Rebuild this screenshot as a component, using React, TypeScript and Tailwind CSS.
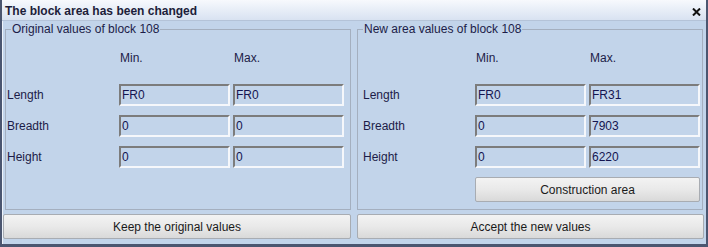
import React from 'react';

const font = { fontFamily: '"Liberation Sans", Arial, sans-serif' };

type Row = { label: string; min: string; max: string };

function Field({ value }: { value: string }) {
  return (
    <div className="h-[22px] border-2 border-t-[#7c7c7c] border-l-[#7c7c7c] border-b-[#f5f7fb] border-r-[#f5f7fb] flex items-center pl-[1px] text-[12px] text-[#141450] leading-none">
      {value}
    </div>
  );
}

function Group({ title, rows, padLeft, children }: { title: string; rows: Row[]; padLeft: string; children?: React.ReactNode }) {
  return (
    <fieldset className="flex-1 h-[188px] border border-[#a4afbf] rounded-none">
      <legend className="ml-[5px] px-[1px] text-[12px] leading-[14px] text-[#1c1c48]">{title}</legend>
      <div className={`grid grid-cols-[109px_111px_111px] gap-x-[3px] ${padLeft}`}>
        <div className="h-[14px] mt-[15px]" />
        <div className="h-[14px] mt-[15px] pl-[1px] text-[12px] leading-[14px] text-[#1c1c48]">Min.</div>
        <div className="h-[14px] mt-[15px] pl-[1px] text-[12px] leading-[14px] text-[#1c1c48]">Max.</div>
      </div>
      <div className={`grid grid-cols-[109px_111px_111px] gap-x-[3px] gap-y-[9px] mt-[19px] ${padLeft}`}>
        {rows.map((r) => (
          <React.Fragment key={r.label}>
            <div className="h-[22px] flex items-center text-[12px] text-[#1c1c48]">{r.label}</div>
            <Field value={r.min} />
            <Field value={r.max} />
          </React.Fragment>
        ))}
        {children}
      </div>
    </fieldset>
  );
}

function Btn({ children, className = '' }: { children: React.ReactNode; className?: string }) {
  return (
    <button className={`h-[25px] border border-[#a8acb2] rounded-[2px] bg-gradient-to-b from-[#f3f3f3] via-[#e9e9e9] to-[#d9d9d9] text-[12px] text-[#1a1a1a] flex items-center justify-center ${className}`}>
      {children}
    </button>
  );
}

export default function App() {
  const original: Row[] = [
    { label: 'Length', min: 'FR0', max: 'FR0' },
    { label: 'Breadth', min: '0', max: '0' },
    { label: 'Height', min: '0', max: '0' },
  ];
  const updated: Row[] = [
    { label: 'Length', min: 'FR0', max: 'FR31' },
    { label: 'Breadth', min: '0', max: '7903' },
    { label: 'Height', min: '0', max: '6220' },
  ];

  return (
    <div style={font} className="w-[708px] h-[247px] bg-[#4b5670] px-[2px] pb-[3px] flex flex-col">
      {/* Title bar */}
      <div className="h-[21px] bg-gradient-to-b from-[#f7f9fd] to-[#d8e2f1] border-b border-[#b4c3d8] flex items-center justify-between pl-[3px] pr-[5px]">
        <span className="text-[12px] font-bold text-[#1d1d3a] leading-none pt-[2px]">The block area has been changed</span>
        <svg width="9" height="8" viewBox="0 0 9 8" className="mt-[3px]">
          <path d="M1 0.5 L8 7.5 M8 0.5 L1 7.5" stroke="#111" strokeWidth="2" />
        </svg>
      </div>

      {/* Body */}
      <div className="flex-1 bg-[#c2d4ea] border-l border-[#eef3fa] flex flex-col">
        <div className="flex gap-[6px] pl-[2px] pr-[3px] mt-[1px]">
          <Group title="Original values of block 108" rows={original} padLeft="pl-[1px]" />
          <Group title="New area values of block 108" rows={updated} padLeft="pl-[5px]">
            <div />
            <Btn className="col-span-2 w-[225px]">Construction area</Btn>
          </Group>
        </div>
        <div className="flex gap-[6px] pr-[2px] mt-[4px]">
          <Btn className="w-[348px]">Keep the original values</Btn>
          <Btn className="w-[347px]">Accept the new values</Btn>
        </div>
      </div>
    </div>
  );
}
